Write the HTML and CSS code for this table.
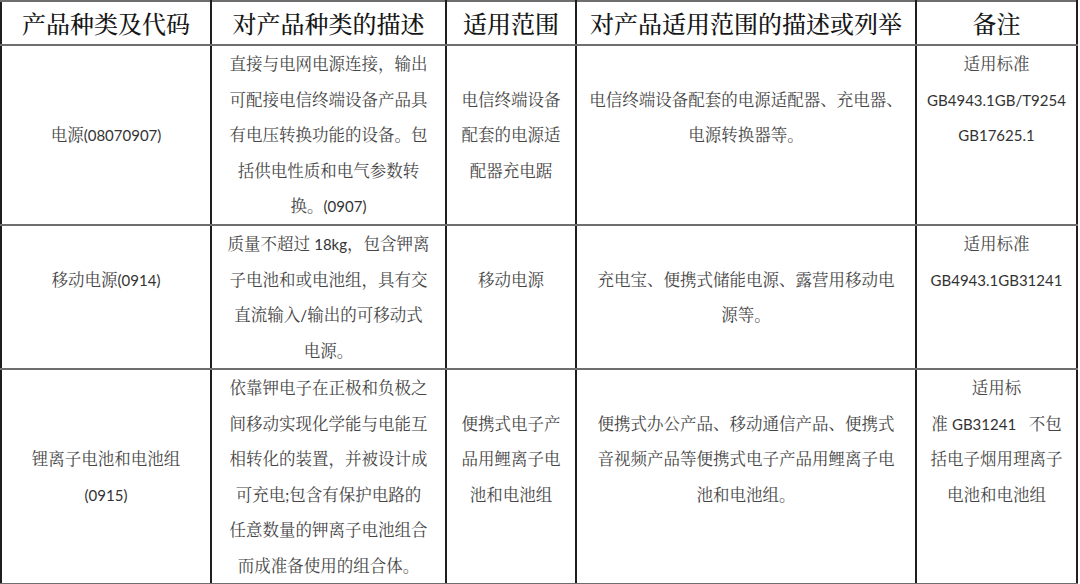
FILE: index.html
```html
<!DOCTYPE html>
<html lang="zh-CN">
<head>
<meta charset="utf-8">
<title>产品种类及代码</title>
<link rel="stylesheet" href="styles.css">
</head>
<body>
<table class="spec">
  <colgroup>
    <col class="c1"><col class="c2"><col class="c3"><col class="c4"><col class="c5">
  </colgroup>
  <thead>
    <tr class="head">
      <th>产品种类及代码</th>
      <th>对产品种类的描述</th>
      <th>适用范围</th>
      <th>对产品适用范围的描述或列举</th>
      <th>备注</th>
    </tr>
  </thead>
  <tbody>
    <tr class="r1">
      <td>电源<span class="lat">(08070907)</span></td>
      <td>直接与电网电源连接，输出<br>可配接电信终端设备产品具<br>有电压转换功能的设备。包<br>括供电性质和电气参数转<br>换。<span class="lat">(0907)</span></td>
      <td>电信终端设备<br>配套的电源适<br>配器充电踞</td>
      <td class="pad-b">电信终端设备配套的电源适配器、充电器、<br>电源转换器等。</td>
      <td class="top"><span>适用标准</span><br><span class="lat">GB4943.1GB/T9254</span><br><span class="lat">GB17625.1</span></td>
    </tr>
    <tr class="r2">
      <td class="pad-b">移动电源<span class="lat">(0914)</span></td>
      <td>质量不超过 <span class="lat">18kg</span>，包含钾离<br>子电池和或电池组，具有交<br>直流输入<span class="lat">/</span>输出的可移动式<br>电源。</td>
      <td class="pad-b">移动电源</td>
      <td>充电宝、便携式储能电源、露营用移动电<br>源等。</td>
      <td class="top">适用标准<br><span class="lat">GB4943.1GB31241</span></td>
    </tr>
    <tr class="r3">
      <td>锂离子电池和电池组<br><span class="lat">(0915)</span></td>
      <td>依靠钾电子在正极和负极之<br>间移动实现化学能与电能互<br>相转化的装置，并被设计成<br>可充电<span class="lat">;</span>包含有保护电路的<br>任意数量的钾离子电池组合<br>而成准备使用的组合体。</td>
      <td class="pad-b">便携式电子产<br>品用鲤离子电<br>池和电池组</td>
      <td class="pad-b">便携式办公产品、移动通信产品、便携式<br>音视频产品等便携式电子产品用鲤离子电<br>池和电池组。</td>
      <td class="top">适用标<br>准 <span class="lat">GB31241</span>&nbsp;&nbsp;&nbsp;不包<br>括电子烟用理离子<br>电池和电池组</td>
    </tr>
  </tbody>
</table>
</body>
</html>
```

FILE: styles.css
```css
html, body {
  margin: 0;
  padding: 0;
  background: #ffffff;
}

.spec {
  border-collapse: collapse;
  table-layout: fixed;
  width: 1078px;
  font-family: "Noto Serif CJK SC", "Noto Sans CJK SC", sans-serif;
  color: #454545;
}

.c1 { width: 210px; }
.c2 { width: 235px; }
.c3 { width: 130px; }
.c4 { width: 340px; }
.c5 { width: 161px; }

.spec th,
.spec td {
  border-top: 2px solid #6e6e6e;
  border-bottom: 2px solid #6e6e6e;
  border-left: 2px solid #1e1e1e;
  border-right: 2px solid #1e1e1e;
  padding: 0;
  text-align: center;
  vertical-align: middle;
  white-space: nowrap;
}

.head { height: 44px; }

.head th {
  font-size: 24px;
  font-weight: 500;
  line-height: 30px;
  color: #161616;
}

.spec td {
  font-size: 16.5px;
  line-height: 35.5px;
}

.r1 { height: 180px; }
.r2 { height: 143px; }
.r3 { height: 214px; }

.spec td.top {
  vertical-align: top;
}

.spec td.pad-b {
  padding-bottom: 35.5px;
}

.lat {
  font-family: "Lato", "Liberation Sans", sans-serif;
  font-size: 15px;
  line-height: 1;
  color: #333333;
}
```
